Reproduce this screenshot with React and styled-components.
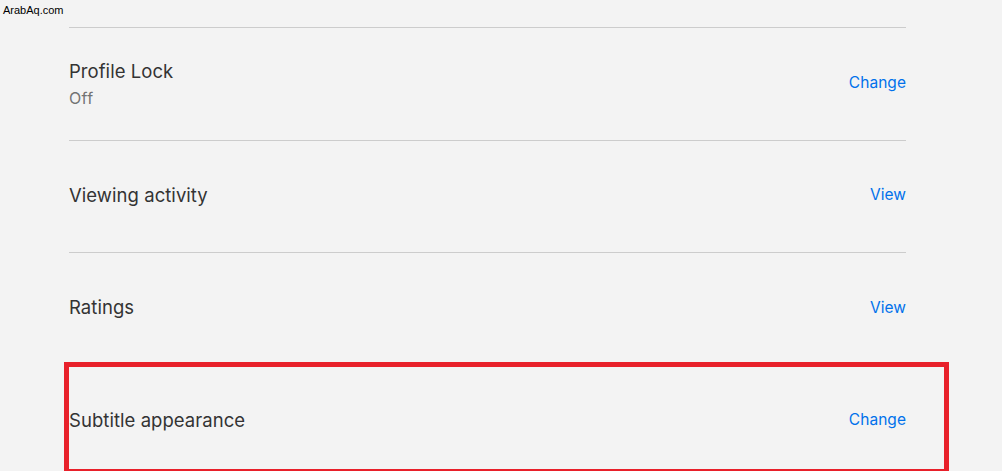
import React from "react";
import styled, { createGlobalStyle } from "styled-components";

const GlobalStyle = createGlobalStyle`
  html, body {
    margin: 0;
    padding: 0;
    background: #f3f3f3;
  }
  body {
    font-family: Inter, "Noto Sans", "Liberation Sans", sans-serif;
  }
`;

const Page = styled.div`
  position: relative;
  width: 1002px;
  height: 471px;
  overflow: hidden;
  background: #f3f3f3;
`;

const Watermark = styled.div`
  position: absolute;
  top: 4px;
  left: 3px;
  font-family: "Liberation Sans", Arial, sans-serif;
  font-size: 11px;
  color: #000;
`;

const List = styled.div`
  margin: 27px 0 0 69px;
  width: 837px;
  border-top: 1px solid #cccccc;
`;

const Row = styled.div`
  display: flex;
  align-items: center;
  justify-content: space-between;
  height: 112.5px;
  border-bottom: 1px solid #cccccc;
  box-sizing: border-box;
`;

const Info = styled.div`
  display: flex;
  flex-direction: column;
  gap: 6px;
  margin-bottom: ${p => (p.$shift ? "-1px" : "3px")};
`;

const Title = styled.div`
  font-size: 18.5px;
  color: #333333;
  letter-spacing: 0.05px;
`;

const Sub = styled.div`
  font-size: 16px;
  color: #737373;
  letter-spacing: 0.3px;
`;

const Action = styled.a`
  font-size: 15.5px;
  color: #0071eb;
  text-decoration: none;
  letter-spacing: 0.05px;
  margin-bottom: 3px;
  cursor: pointer;
`;

const Highlight = styled.div`
  position: absolute;
  left: 64px;
  top: 362px;
  width: 885px;
  height: 112px;
  border: 5px solid #e8202a;
  box-sizing: border-box;
  pointer-events: none;
`;

const rows = [
  { title: "Profile Lock", sub: "Off", action: "Change" },
  { title: "Viewing activity", action: "View" },
  { title: "Ratings", action: "View" },
  { title: "Subtitle appearance", action: "Change" },
];

export default function App() {
  return (
    <Page>
      <GlobalStyle />
      <Watermark>ArabAq.com</Watermark>
      <List>
        {rows.map(r => (
          <Row key={r.title}>
            <Info $shift={!!r.sub}>
              <Title>{r.title}</Title>
              {r.sub ? <Sub>{r.sub}</Sub> : null}
            </Info>
            <Action>{r.action}</Action>
          </Row>
        ))}
      </List>
      <Highlight />
    </Page>
  );
}
